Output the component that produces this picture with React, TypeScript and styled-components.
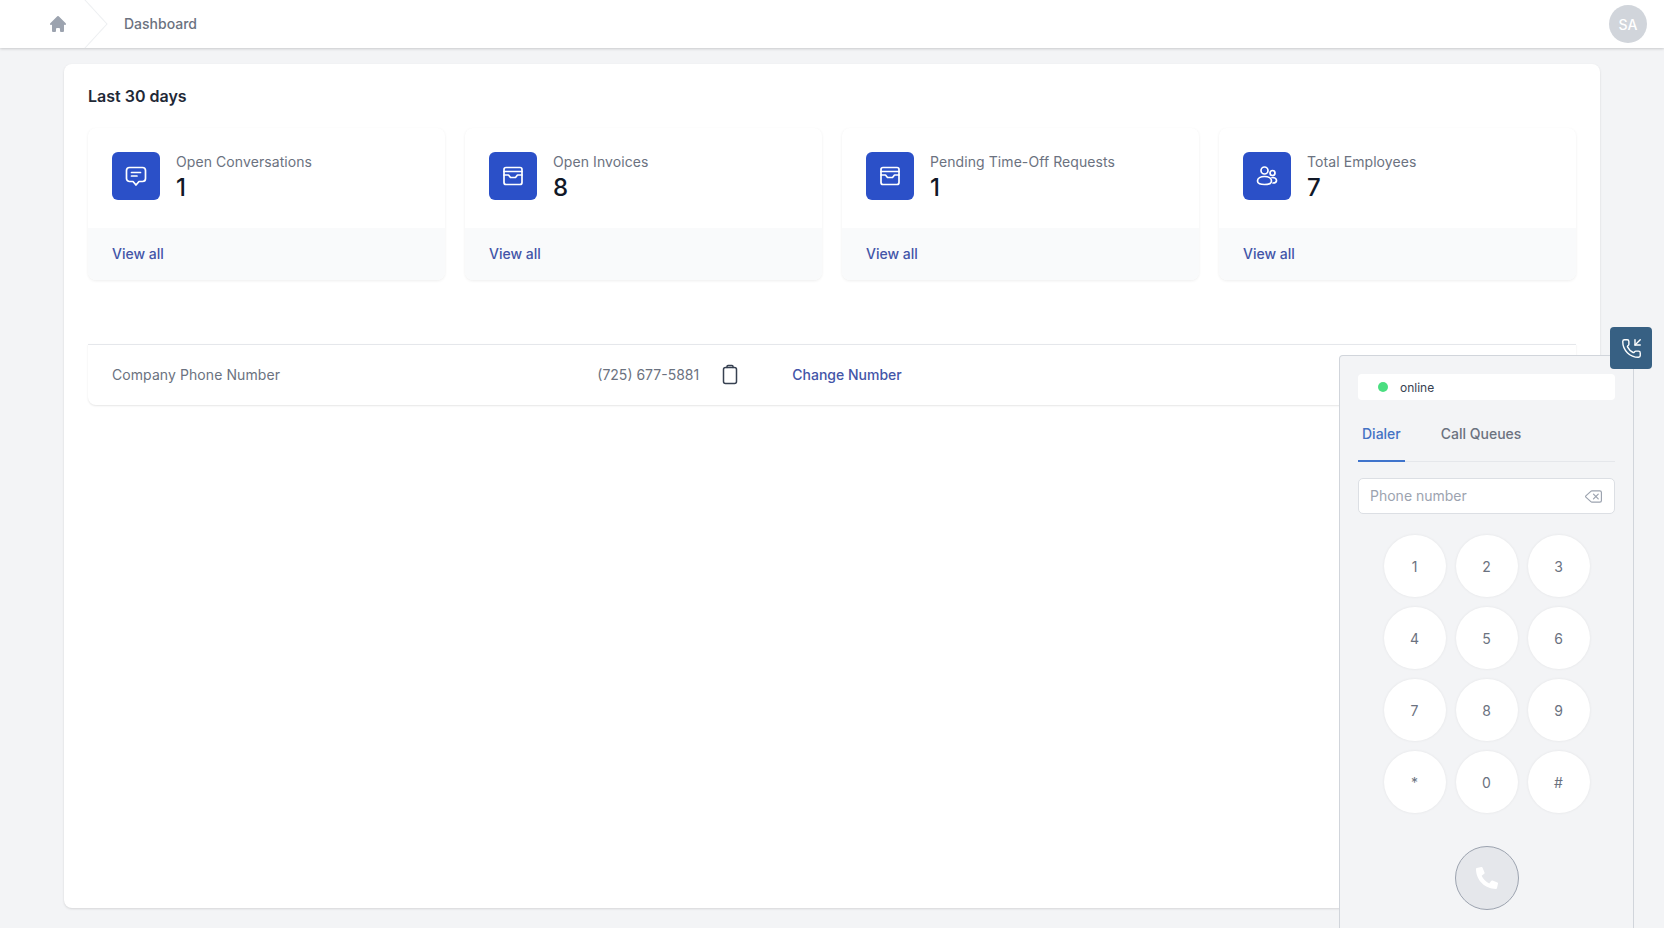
import React from "react";
import styled, { createGlobalStyle } from "styled-components";
import { PhoneIncoming, Delete } from "lucide-react";
import { FaPhoneAlt } from "react-icons/fa";

const Global = createGlobalStyle`
  * { box-sizing: border-box; }
  html, body { margin: 0; padding: 0; height: 100%; }
  body { font-family: Inter, "Noto Sans", "Liberation Sans", sans-serif; background: #f3f4f6; color: #111827; }
  #root { height: 100%; }
`;

const Shell = styled.div`
  position: relative;
  display: flex;
  flex-direction: column;
  height: 100vh;
  overflow: hidden;
`;

const Header = styled.header`
  display: flex;
  align-items: center;
  height: 48px;
  flex: none;
  padding: 0 17px 0 48px;
  background: #fff;
  box-shadow: 0 1px 3px rgba(0, 0, 0, 0.12), 0 1px 2px rgba(0, 0, 0, 0.06);
`;

const HomeIcon = styled.svg`
  width: 20px;
  height: 20px;
  fill: #9ca3af;
  flex: none;
`;

const Chevron = styled.svg`
  width: 24px;
  height: 48px;
  margin-left: 16px;
  fill: #eef0f2;
  flex: none;
`;

const Crumb = styled.span`
  margin-left: 16px;
  padding-bottom: 2px;
  font-size: 14px;
  font-weight: 500;
  color: #6b7280;
`;

const Avatar = styled.div`
  margin-left: auto;
  width: 38px;
  height: 38px;
  border-radius: 50%;
  background: #d1d5db;
  color: #fff;
  font-size: 14px;
  font-weight: 500;
  display: flex;
  align-items: center;
  justify-content: center;
`;

const Main = styled.main`
  flex: 1;
  min-height: 0;
  display: flex;
  padding: 16px 64px 20px;
`;

const Card = styled.section`
  flex: 1;
  background: #fff;
  border-radius: 8px;
  padding: 20px 24px;
  box-shadow: 0 1px 3px rgba(0, 0, 0, 0.08), 0 1px 2px rgba(0, 0, 0, 0.05);
`;

const Title = styled.h3`
  margin: 0;
  font-size: 16px;
  line-height: 24px;
  font-weight: 600;
  color: #1f2937;
`;

const Tiles = styled.div`
  display: grid;
  grid-template-columns: repeat(4, 1fr);
  gap: 20px;
  margin-top: 20px;
`;

const Tile = styled.div`
  background: #fff;
  border-radius: 8px;
  overflow: hidden;
  box-shadow: 0 1px 3px rgba(0, 0, 0, 0.07), 0 0 1px rgba(0, 0, 0, 0.02);
`;

const TileBody = styled.div`
  display: flex;
  gap: 16px;
  height: 100px;
  padding: 24px 24px 0;
`;

const IconBox = styled.div`
  width: 48px;
  height: 48px;
  flex: none;
  border-radius: 6px;
  background: #2b50c8;
  display: flex;
  align-items: center;
  justify-content: center;
`;

const TileIcon = styled.svg`
  width: 24px;
  height: 24px;
  fill: none;
  stroke: #fff;
  stroke-width: 1.7;
  stroke-linecap: round;
  stroke-linejoin: round;
`;

const TileLabel = styled.div`
  font-size: 14px;
  line-height: 20px;
  font-weight: 400;
  letter-spacing: 0.08px;
  color: #6b7280;
`;

const TileValue = styled.div`
  font-size: 24px;
  line-height: 32px;
  font-weight: 500;
  color: #111827;
`;

const TileFooter = styled.div`
  height: 52px;
  padding: 16px 24px;
  background: #f9fafb;
  font-size: 14px;
  line-height: 20px;
`;

const LinkText = styled.a`
  color: #4355a8;
  font-weight: 500;
  text-decoration: none;
`;

const InfoRow = styled.div`
  display: flex;
  align-items: center;
  height: 61px;
  margin-top: 64px;
  padding: 0 24px 2px;
  border-top: 1px solid #e5e7eb;
  border-radius: 0 0 8px 8px;
  box-shadow: 0 1px 2px rgba(0, 0, 0, 0.1);
  font-size: 14px;
  color: #6b7280;
`;

const InfoLabel = styled.div`
  width: 485.3px;
  flex: none;
  letter-spacing: 0.08px;
`;

const InfoValue = styled.div`
  width: 103px;
  flex: none;
  white-space: nowrap;
`;

const ClipIcon = styled.svg`
  width: 24px;
  height: 24px;
  margin-left: 18px;
  margin-right: 50px;
  flex: none;
  fill: none;
  stroke: #374151;
  stroke-width: 1.5;
  stroke-linecap: round;
  stroke-linejoin: round;
`;

const Float = styled.button`
  position: absolute;
  top: 327px;
  left: 1610px;
  width: 42px;
  height: 42px;
  padding: 0;
  border: none;
  border-radius: 4px;
  background: #376083;
  color: #fff;
  display: flex;
  align-items: center;
  justify-content: center;
  z-index: 2;
`;

const Dialer = styled.aside`
  position: absolute;
  top: 355px;
  left: 1339px;
  width: 295px;
  bottom: 0;
  padding: 18px 18px 0;
  background: #f3f4f6;
  border: 1px solid #d1d5db;
  border-bottom: none;
  border-radius: 4px 4px 0 0;
  z-index: 1;
`;

const Status = styled.div`
  display: flex;
  align-items: center;
  height: 26px;
  padding-left: 20px;
  gap: 12px;
  background: #fff;
  border-radius: 4px;
  font-size: 12px;
  color: #374151;
`;

const Dot = styled.span`
  width: 10px;
  height: 10px;
  border-radius: 50%;
  background: #4ade80;
`;

const TabBar = styled.div`
  display: flex;
  gap: 32px;
  margin-top: 14px;
  border-bottom: 1px solid #e5e7eb;
`;

const Tab = styled.div<{ $active?: boolean }>`
  padding: 10px 4px 16px;
  margin-bottom: -1px;
  font-size: 14px;
  line-height: 20px;
  font-weight: 500;
  color: ${(p) => (p.$active ? "#4472c4" : "#6b7280")};
  border-bottom: 2px solid ${(p) => (p.$active ? "#3f74cc" : "transparent")};
`;

const PhoneField = styled.div`
  display: flex;
  align-items: center;
  justify-content: space-between;
  height: 36px;
  margin-top: 16px;
  padding: 0 11px 2px 11px;
  background: #fff;
  border: 1px solid #dcdfe4;
  border-radius: 5px;
  color: #9ca3af;
`;

const PhoneInput = styled.input`
  border: none;
  outline: none;
  padding: 0;
  flex: 1;
  min-width: 0;
  background: transparent;
  font: 400 14px Inter, "Noto Sans", sans-serif;
  color: #374151;
  &::placeholder { color: #9ca3af; opacity: 1; }
`;

const BackspaceSlot = styled.span`
  display: flex;
  margin-top: 2px;
`;

const Keypad = styled.div`
  display: grid;
  grid-template-columns: repeat(3, 62px);
  grid-auto-rows: 62px;
  gap: 10px;
  justify-content: center;
  margin-top: 21px;
`;

const Key = styled.button`
  border: none;
  padding: 0;
  border-radius: 50%;
  background: #fff;
  box-shadow: 0 0 3px rgba(0, 0, 0, 0.07);
  font: 400 14px Inter, "Noto Sans", sans-serif;
  color: #6b7280;
`;

const CallButton = styled.button`
  display: flex;
  align-items: center;
  justify-content: center;
  width: 64px;
  height: 64px;
  margin: 33px auto 0;
  padding: 0;
  border: 1px solid #9ca3af;
  border-radius: 50%;
  background: #e5e7eb;
  color: #fff;
`;

const stats = [
  { label: "Open Conversations", value: "1", icon: "chat" },
  { label: "Open Invoices", value: "8", icon: "tray" },
  { label: "Pending Time-Off Requests", value: "1", icon: "tray" },
  { label: "Total Employees", value: "7", icon: "users" },
];

const StatIcon = ({ kind }: { kind: string }) => (
  <TileIcon viewBox="0 0 24 24">
    {kind === "chat" && (
      <>
        <path d="M5.5 3.5h13a3 3 0 0 1 3 3v8a3 3 0 0 1-3 3H15l-3 3.5L9 17.500H5.500a3 3 0 0 1-3-3v-8a3 3 0 0 1 3-3z" />
        <path d="M7.500 8.500h9M7.500 12h5.500" />
      </>
    )}
    {kind === "tray" && (
      <>
        <rect x="3" y="3.500" width="18" height="17" rx="2" />
        <path d="M3 7.500h18M3 11h4.500l2 2.500h5l2-2.500H21" />
      </>
    )}
    {kind === "users" && (
      <>
        <circle cx="9.500" cy="6.500" r="3.500" />
        <circle cx="17.500" cy="9" r="2.500" />
        <path d="M2.500 17c0-2.800 3.100-4.500 7-4.500s7 1.700 7 4.500-3.100 3.500-7 3.500-7-.7-7-3.500z" />
        <path d="M17 13.500c2.600 0 4.500 1.100 4.500 3 0 1.600-1.500 2.500-3.500 2.500" />
      </>
    )}
  </TileIcon>
);

const keys = ["1", "2", "3", "4", "5", "6", "7", "8", "9", "*", "0", "#"];

export default function App() {
  return (
    <Shell>
      <Global />
      <Header>
        <HomeIcon viewBox="0 0 20 20">
          <path d="M10.707 2.293a1 1 0 00-1.414 0l-7 7a1 1 0 001.414 1.414L4 10.414V17a1 1 0 001 1h2a1 1 0 001-1v-2a1 1 0 011-1h2a1 1 0 011 1v2a1 1 0 001 1h2a1 1 0 001-1v-6.586l.293.293a1 1 0 001.414-1.414l-7-7z" />
        </HomeIcon>
        <Chevron viewBox="0 0 24 44" preserveAspectRatio="none">
          <path d="M.293 0l22 22-22 22h1.414l22-22-22-22H.293z" />
        </Chevron>
        <Crumb>Dashboard</Crumb>
        <Avatar>SA</Avatar>
      </Header>
      <Main>
        <Card>
          <Title>Last 30 days</Title>
          <Tiles>
            {stats.map((s) => (
              <Tile key={s.label}>
                <TileBody>
                  <IconBox>
                    <StatIcon kind={s.icon} />
                  </IconBox>
                  <div>
                    <TileLabel>{s.label}</TileLabel>
                    <TileValue>{s.value}</TileValue>
                  </div>
                </TileBody>
                <TileFooter>
                  <LinkText href="#">View all</LinkText>
                </TileFooter>
              </Tile>
            ))}
          </Tiles>
          <InfoRow>
            <InfoLabel>Company Phone Number</InfoLabel>
            <InfoValue>(725) 677-5881</InfoValue>
            <ClipIcon viewBox="0 0 24 24">
              <rect x="5.500" y="5.500" width="13" height="16" rx="2" />
              <path d="M9 5.500V4.500a1 1 0 0 1 1-1h4a1 1 0 0 1 1 1v1" />
            </ClipIcon>
            <LinkText href="#">Change Number</LinkText>
          </InfoRow>
        </Card>
      </Main>
      <Float aria-label="Calls">
        <PhoneIncoming size={21} strokeWidth={1.6} />
      </Float>
      <Dialer>
        <Status>
          <Dot />
          online
        </Status>
        <TabBar>
          <Tab $active>Dialer</Tab>
          <Tab>Call Queues</Tab>
        </TabBar>
        <PhoneField>
          <PhoneInput placeholder="Phone number" />
          <BackspaceSlot>
            <Delete size={19} strokeWidth={1.5} />
          </BackspaceSlot>
        </PhoneField>
        <Keypad>
          {keys.map((k) => (
            <Key key={k}>{k}</Key>
          ))}
        </Keypad>
        <CallButton aria-label="Call">
          <FaPhoneAlt size={22} />
        </CallButton>
      </Dialer>
    </Shell>
  );
}
